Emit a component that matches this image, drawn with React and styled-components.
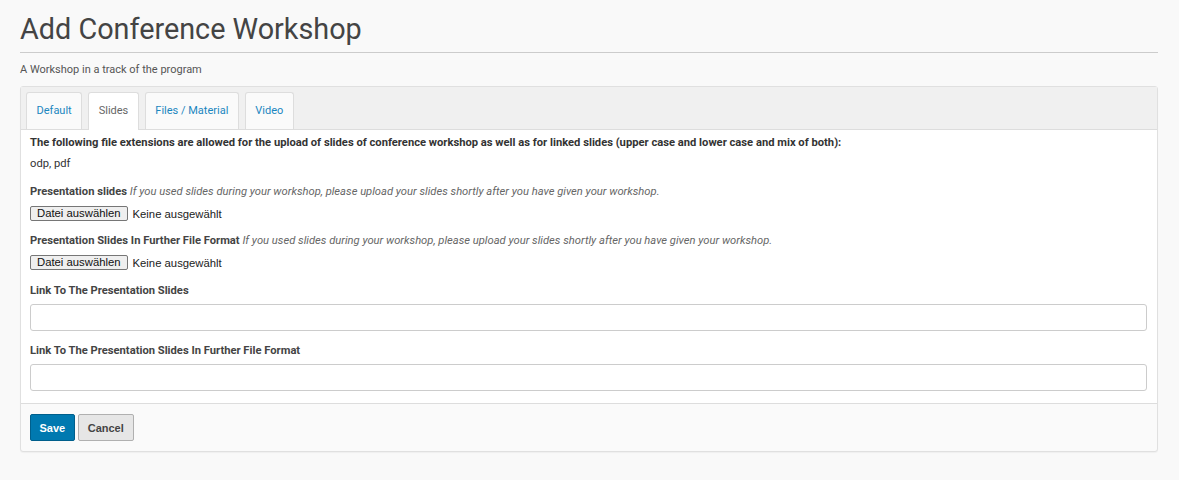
import React from "react";
import styled, { createGlobalStyle } from "styled-components";

const GlobalStyle = createGlobalStyle`
    body {
        margin: 0;
        background: #f9f9f9;
        font-family: Roboto, "Liberation Sans", sans-serif;
        color: #333;
    }
`
const Page = styled.div`
    padding: 12px 21px 28px 20px;
`
const Title = styled.h1`
    margin: 0;
    font-size: 28.8px;
    font-weight: 400;
    color: #444;
    line-height: 34px;
    padding-bottom: 6px;
    border-bottom: 1px solid #ccc;
`
const Subtitle = styled.p`
    margin: 10px 0 10px;
    font-size: 11px;
    color: #555;
`
const Panel = styled.div`
    border: 1px solid #e0e0e0;
    border-radius: 3px;
    background: #fafafa;
    box-shadow: 0 1px 1px rgba(0,0,0,0.04);
`
const TabBar = styled.div`
    display: flex;
    gap: 6px;
    padding: 5px 5px 0;
    background: #f0f0f0;
    border-bottom: 1px solid #ddd;
`
const Tab = styled.div`
    padding: 0 9.5px;
    line-height: 36px;
    font-size: 11px;
    color: ${props => props.active ? "#666" : "#1a86bf"};
    background: ${props => props.active ? "#fff" : "#fafafa"};
    border: 1px solid #ddd;
    border-bottom: none;
    border-radius: 3px 3px 0 0;
    margin-bottom: ${props => props.active ? "-1px" : "0"};
    height: ${props => props.active ? "37px" : "36px"};
`
const Body = styled.div`
    background: #fff;
    padding: 5px 10px 12px 9px;
    border-bottom: 1px solid #ddd;
`
const Info = styled.p`
    margin: 0;
    font-size: 11.2px;
    font-weight: 700;
    color: #333;
    line-height: 16px;
`
const Extensions = styled.p`
    margin: 5px 0 0;
    font-size: 11.2px;
    line-height: 16px;
`
const Field = styled.div`
    margin-top: ${props => props.gap || 12}px;
`
const Label = styled.div`
    font-size: 11.2px;
    font-weight: 700;
    color: #444;
    line-height: 16px;
`
const Hint = styled.span`
    font-weight: 400;
    font-style: italic;
    color: #666;
`
const FileRow = styled.div`
    display: flex;
    align-items: center;
    gap: 5px;
    height: 15px;
    margin-top: 6px;
    font-family: "Liberation Sans", Arial, sans-serif;
    font-size: 11.3px;
    color: #222;
`
const FileButton = styled.button`
    font-family: "Liberation Sans", Arial, sans-serif;
    font-size: 11.3px;
    color: #111;
    background: #efefef;
    border: 1px solid #767676;
    border-radius: 2px;
    height: 15px;
    padding: 0 6px;
    line-height: 13px;
`
const TextInput = styled.input`
    display: block;
    box-sizing: border-box;
    width: 100%;
    height: 27px;
    margin-top: 5px;
    border: 1px solid #ccc;
    border-radius: 3px;
    background: #fff;
`
const Footer = styled.div`
    display: flex;
    gap: 3px;
    padding: 10px 9px 10px;
`
const Button = styled.button`
    font-family: "Liberation Sans", Arial, sans-serif;
    font-size: 11px;
    font-weight: 700;
    height: 27px;
    padding: 0 ${props => props.primary ? 8.5 : 9}px;
    border-radius: 2px;
    color: ${props => props.primary ? "#fff" : "#444"};
    background: ${props => props.primary ? "#0079b0" : "#e6e6e6"};
    border: 1px solid ${props => props.primary ? "#005f8c" : "#b0b0b0"};
`

export default function App() {
    return (
        <Page>
            <GlobalStyle />
            <Title>Add Conference Workshop</Title>
            <Subtitle>A Workshop in a track of the program</Subtitle>
            <Panel>
                <TabBar>
                    <Tab>Default</Tab>
                    <Tab active>Slides</Tab>
                    <Tab>Files / Material</Tab>
                    <Tab>Video</Tab>
                </TabBar>
                <Body>
                    <Info>The following file extensions are allowed for the upload of slides of conference workshop as well as for linked slides (upper case and lower case and mix of both):</Info>
                    <Extensions>odp, pdf</Extensions>
                    <Field gap={12}>
                        <Label>Presentation slides <Hint>If you used slides during your workshop, please upload your slides shortly after you have given your workshop.</Hint></Label>
                        <FileRow>
                            <FileButton>Datei auswählen</FileButton>
                            <span>Keine ausgewählt</span>
                        </FileRow>
                    </Field>
                    <Field gap={12}>
                        <Label>Presentation Slides In Further File Format <Hint>If you used slides during your workshop, please upload your slides shortly after you have given your workshop.</Hint></Label>
                        <FileRow>
                            <FileButton>Datei auswählen</FileButton>
                            <span>Keine ausgewählt</span>
                        </FileRow>
                    </Field>
                    <Field gap={13}>
                        <Label>Link To The Presentation Slides</Label>
                        <TextInput />
                    </Field>
                    <Field gap={12}>
                        <Label>Link To The Presentation Slides In Further File Format</Label>
                        <TextInput />
                    </Field>
                </Body>
                <Footer>
                    <Button primary>Save</Button>
                    <Button>Cancel</Button>
                </Footer>
            </Panel>
        </Page>
    )
}
